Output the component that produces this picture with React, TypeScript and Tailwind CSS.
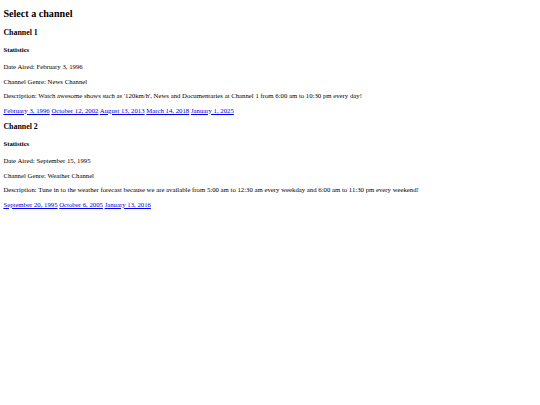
const CHANNELS = [
    {
        name: 'Channel 1',
        aired: 'February 3, 1996',
        genre: 'News Channel',
        description:
            "Watch awesome shows such as '120km/h', News and Documentaries at Channel 1 from 6:00 am to 10:30 pm every day!",
        dates: ['February 3, 1996', 'October 12, 2002', 'August 13, 2013', 'March 14, 2018', 'January 1, 2025'],
    },
    {
        name: 'Channel 2',
        aired: 'September 15, 1995',
        genre: 'Weather Channel',
        description:
            'Tune in to the weather forecast because we are available from 5:00 am to 12:30 am every weekday and 6:00 am to 11:30 pm every weekend!',
        dates: ['September 20, 1995', 'October 6, 2005', 'January 13, 2016'],
    },
]

const P = 'mt-[6.75px] text-[6.75px] leading-[7.76px]'

const App = () => {
    return (
        <div className="min-h-[405px] w-[540px] bg-white text-black font-['Liberation_Serif','Times_New_Roman',serif]">
            <div className="flex flex-col pl-[3.375px] pt-[8.4px]">
                <h2 className="text-[10.125px] leading-[11.64px] font-bold">Select a channel</h2>

                {CHANNELS.map((ch, i) => (
                    <div key={ch.name} className="flex flex-col">
                        <h3 className={`${i === 0 ? 'mt-[8.4px]' : 'mt-[7.9px]'} text-[7.9px] leading-[9.08px] font-bold`}>
                            {ch.name}
                        </h3>
                        <h4 className="mt-[8.98px] text-[6.75px] leading-[7.76px] font-bold">Statistics</h4>
                        <p className="mt-[8.98px] text-[6.75px] leading-[7.76px]">Date Aired: {ch.aired}</p>
                        <p className={P}>Channel Genre: {ch.genre}</p>
                        <p className={P}>Description: {ch.description}</p>
                        <p className={P}>
                            {ch.dates.map((d, j) => (
                                <span key={d}>
                                    <a href="#" className="text-[#0000ee] underline">
                                        {d}
                                    </a>
                                    {j < ch.dates.length - 1 ? ' ' : ''}
                                </span>
                            ))}
                        </p>
                    </div>
                ))}
            </div>
        </div>
    )
}

export default App
